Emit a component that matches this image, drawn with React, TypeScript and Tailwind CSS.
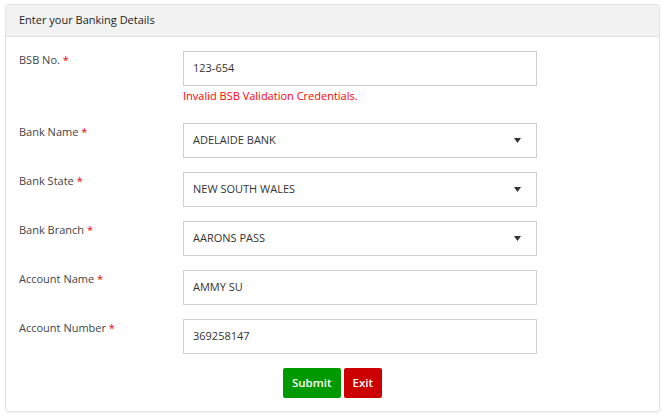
import React from "react";

type Field = {
  label: string;
  value: string;
  select?: boolean;
  error?: string;
};

const fields: Field[] = [
  { label: "BSB No.", value: "123-654", error: "Invalid BSB Validation Credentials." },
  { label: "Bank Name", value: "ADELAIDE BANK", select: true },
  { label: "Bank State", value: "NEW SOUTH WALES", select: true },
  { label: "Bank Branch", value: "AARONS PASS", select: true },
  { label: "Account Name", value: "AMMY SU" },
  { label: "Account Number", value: "369258147" },
];

function Caret() {
  return (
    <svg width="7" height="5" viewBox="0 0 7 5" className="fill-[#333]">
      <path d="M0 0h7L3.5 5z" />
    </svg>
  );
}

export default function App() {
  return (
    <div
      className="min-h-[418px] bg-white pl-[5px] pt-[4px]"
      style={{ fontFamily: '"Open Sans", "Noto Sans", sans-serif' }}
    >
      <div className="w-[655px] rounded-[3px] border border-[#e3e3e3] shadow-[0_1px_2px_rgba(0,0,0,0.05)]">
        {/* Header */}
        <div className="flex h-[32px] items-center rounded-t-[3px] border-b border-[#e3e3e3] bg-[#f2f2f2] px-[13px] text-[11px] text-[#222]">
          Enter your Banking Details
        </div>

        {/* Body */}
        <div className="px-[13px] pt-[14px] pb-[13px]">
          <div className="flex flex-col gap-[14px]">
            {fields.map((f) => (
              <div key={f.label} className="flex">
                <div className="w-[164px] shrink-0 pt-[1px] text-[11px] leading-[16px] text-[#444]">
                  {f.label} <span className="text-[#e00]">*</span>
                </div>
                <div className="w-[354px]">
                  <div className="flex h-[35px] items-center justify-between border border-[#d0d0d0] bg-white pl-[9px] pr-[15px] text-[11px] text-[#333]">
                    <span>{f.value}</span>
                    {f.select && <Caret />}
                  </div>
                  {f.error && (
                    <div className="h-[23px] pt-[2px] text-[11px] leading-[16px] text-[#f00]">
                      {f.error}
                    </div>
                  )}
                </div>
              </div>
            ))}
          </div>

          {/* Actions */}
          <div className="mt-[14px] flex justify-center gap-[3px]">
            <button className="h-[30px] rounded-[2px] bg-[#009a00] px-[9px] text-[11.5px] font-semibold text-white">
              Submit
            </button>
            <button className="h-[30px] rounded-[2px] bg-[#cc0000] px-[9px] text-[11.5px] font-semibold text-white">
              Exit
            </button>
          </div>
        </div>
      </div>
    </div>
  );
}
